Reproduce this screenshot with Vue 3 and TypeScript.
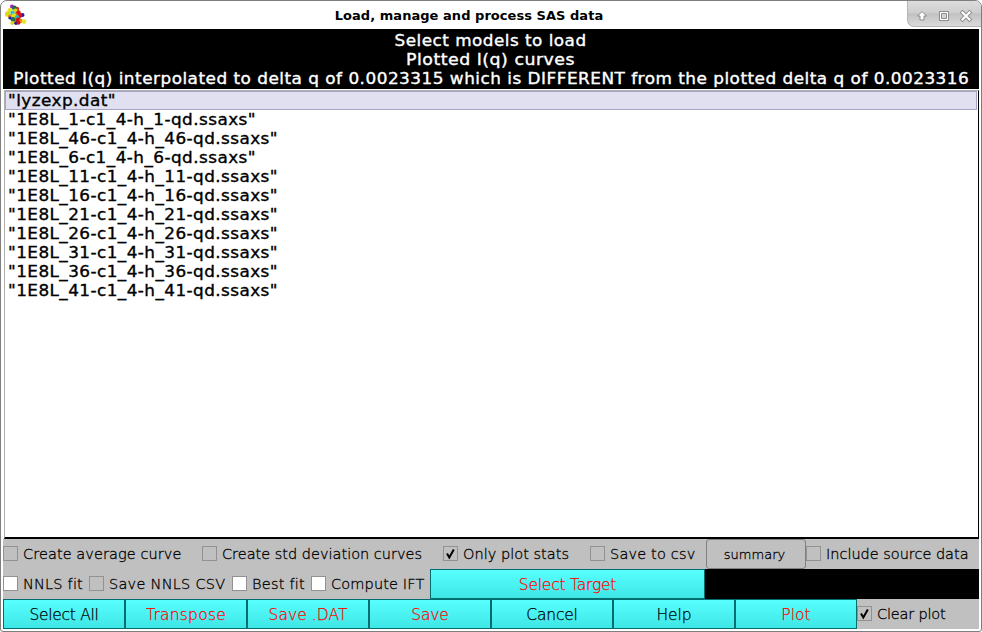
<script setup lang="ts">
type Option = { label: string; width: number; slot: number; checked?: boolean; disabled?: boolean }
type Action = { label: string; width: number; accent?: boolean }

const headings = [
  { text: 'Select models to load', width: 192 },
  { text: 'Plotted I(q) curves', width: 169 },
  { text: 'Plotted I(q) interpolated to delta q of 0.0023315 which is DIFFERENT from the plotted delta q of 0.0023316', width: 956 },
]

const files = [
  { text: '"lyzexp.dat"', width: 108 },
  ...[1, 46, 6, 11, 16, 21, 26, 31, 36, 41].map((n) => ({
    text: `"1E8L_${n}-c1_4-h_${n}-qd.ssaxs"`,
    width: n < 10 ? 248 : 270,
  })),
]

const curveOptions: Option[] = [
  { label: 'Create average curve', width: 158.5, slot: 199, disabled: true },
  { label: 'Create std deviation curves', width: 200, slot: 241, disabled: true },
  { label: 'Only plot stats', width: 106, slot: 147, checked: true },
  { label: 'Save to csv', width: 85.5, slot: 116, disabled: true },
]
const includeOption: Option[] = [{ label: 'Include source data', width: 142.5, slot: 173, disabled: true }]
const fitOptions: Option[] = [
  { label: 'NNLS fit', width: 60, slot: 86 },
  { label: 'Save NNLS CSV', width: 116.5, slot: 143, disabled: true },
  { label: 'Best fit', width: 53, slot: 79 },
  { label: 'Compute IFT', width: 93.5, slot: 119 },
]
const clearOption: Option[] = [{ label: 'Clear plot', width: 68.5, slot: 122, checked: true }]

const actions: Action[] = [
  { label: 'Select All', width: 69 },
  { label: 'Transpose', width: 80, accent: true },
  { label: 'Save .DAT', width: 79, accent: true },
  { label: 'Save', width: 37.5, accent: true },
  { label: 'Cancel', width: 51.5 },
  { label: 'Help', width: 35 },
  { label: 'Plot', width: 29.5, accent: true },
]

const atoms: [number, number, number, string][] = [
  [7, 2.6, 2, '#b414d2'], [12, 5, 2.2, '#e02018'], [9.3, 4, 2.4, '#1f6b4c'], [5, 6.3, 2.4, '#e8e020'],
  [10.5, 7, 2.4, '#d9d420'], [2.7, 10, 2.8, '#dcd81c'], [12, 10, 2.4, '#e88818'], [7.5, 9, 2.2, '#26c4d6'], [13.5, 8.5, 2.2, '#d81414'],
  [17.5, 11, 2, '#1818b0'], [15, 11.5, 2.4, '#e01010'], [5, 12.5, 2, '#e88010'], [9, 12, 2.4, '#e4de1c'],
  [5, 14, 1.6, '#1420b0'], [10.5, 16.5, 2.4, '#e88818'], [12, 13, 2.1, '#20b8c8'], [8, 15.5, 2.4, '#1f7050'], [13.3, 16, 2.6, '#d81010'],
  [16, 17, 2, '#e88818'], [19, 17.6, 2.3, '#e8e428'], [7.4, 19, 2.1, '#dcd818'], [11, 19.2, 1.7, '#1818a8'], [13.5, 18.8, 2, '#d81010'],
]

// Spreads or tightens the letters so that a caption occupies its nominal width.
const vFit = {
  mounted(el: HTMLElement, binding: { value: number }) {
    const natural = el.getBoundingClientRect().width
    el.style.letterSpacing = `${(binding.value - natural) / (el.textContent ?? ' ').length}px`
  },
}

// Widens the glyphs themselves, for the extended face of the banner and the list.
const vStretch = {
  mounted(el: HTMLElement, binding: { value: number }) {
    el.style.transform = `scaleX(${binding.value / el.getBoundingClientRect().width})`
  },
}
</script>

<template>
  <div class="window">
    <header class="titlebar">
      <svg class="logo" width="22" height="22" viewBox="0 0 22 22">
        <circle v-for="(a, i) in atoms" :key="i" :cx="a[0]" :cy="a[1]" :r="a[2]" :fill="a[3]" />
      </svg>
      <span class="caption" v-fit="268.500">Load, manage and process SAS data</span>
      <div class="controls">
        <svg width="74" height="26" viewBox="0 0 74 26" fill="none">
          <path d="M14 10.500l4.500 4.500h-2.500v4h-4v-4h-2.500z" fill="#fff" stroke="#8c8c8c" stroke-linejoin="round" />
          <path d="M31.500 10.500h9v9h-9z" fill="#fff" stroke="#8c8c8c" />
          <path d="M33.500 12.500h5v5h-5z" fill="#d4d4d4" stroke="#8c8c8c" />
          <path d="M54.500 11.500l7 7M61.500 11.500l-7 7" stroke="#8c8c8c" stroke-width="4" stroke-linecap="square" />
          <path d="M54.500 11.500l7 7M61.500 11.500l-7 7" stroke="#fff" stroke-width="2.200" stroke-linecap="square" />
        </svg>
      </div>
    </header>

    <main class="content">
      <div class="banner">
        <div v-for="h in headings" :key="h.text"><span v-stretch="h.width">{{ h.text }}</span></div>
      </div>

      <ul class="list">
        <li v-for="(f, i) in files" :key="f.text" :class="{ selected: i === 0 }"><span v-stretch="f.width">{{ f.text }}</span></li>
      </ul>

      <div class="bar">
        <label v-for="o in curveOptions" :key="o.label" class="option" :style="{ width: o.slot + 'px' }">
          <span class="box" :class="{ dim: o.disabled || o.checked }">
            <svg v-if="o.checked" width="13" height="13" viewBox="0 0 13 13"><path d="M3 6.500l2.300 4L9.800 2.500" /></svg>
          </span>
          <span v-fit="o.width" class="text">{{ o.label }}</span>
        </label>
        <button class="summary"><span v-fit="61.500">summary</span></button>
        <label v-for="o in includeOption" :key="o.label" class="option" :style="{ width: o.slot + 'px' }">
          <span class="box dim"></span><span v-fit="o.width" class="text">{{ o.label }}</span>
        </label>
      </div>

      <div class="bar">
        <label v-for="o in fitOptions" :key="o.label" class="option" :style="{ width: o.slot + 'px' }">
          <span class="box" :class="{ dim: o.disabled }"></span><span v-fit="o.width" class="text">{{ o.label }}</span>
        </label>
        <button class="action accent target"><span v-fit="97.500">Select Target</span></button>
        <div class="field"></div>
      </div>

      <div class="bar">
        <button v-for="a in actions" :key="a.label" class="action" :class="{ accent: a.accent }"><span v-fit="a.width">{{ a.label }}</span></button>
        <label v-for="o in clearOption" :key="o.label" class="option" :style="{ width: o.slot + 'px' }">
          <span class="box dim"><svg width="13" height="13" viewBox="0 0 13 13"><path d="M3 6.500l2.300 4L9.800 2.500" /></svg></span>
          <span v-fit="o.width" class="text">{{ o.label }}</span>
        </label>
      </div>
    </main>
  </div>
</template>

<style>
body { background: #fff; overflow: hidden; }
</style>

<style scoped>
* { box-sizing: border-box; }
span { white-space: nowrap; }
.window {
  width: 982px; height: 632px; padding: 0 2px 2px;
  border: 1px solid #7e7e7e; border-radius: 7px 7px 3px 3px;
  font-family: "DejaVu Sans", sans-serif; background: #fff; color: #000;
}
.titlebar { height: 28px; margin-right: -2px; display: grid; grid-template-columns: 74px 1fr 74px; }
.logo { margin: 3px 0 0 2px; }
.caption { justify-self: center; margin-left: -46px; font-weight: bold; font-size: 13px; line-height: 29px; }
.controls {
  height: 26px; border: 1px solid #b4b4b4; border-width: 0 0 1px 1px; border-radius: 0 6px 0 7px;
  background: linear-gradient(#dcdcdc 0, #cfcfcf 45%, #c2c2c2 52%, #dadada 100%);
}
.controls svg { display: block; }
.content { width: 976px; height: 600px; display: flex; flex-direction: column; }
.banner {
  flex: none; height: 60px; padding-top: 3px; background: #000; color: #fff; text-align: center;
  font-size: 15.5px; line-height: 19px; letter-spacing: 0.45px; -webkit-text-stroke: 0.35px #fff;
}
.banner div { height: 19px; }
.banner span { display: inline-block; transform-origin: center; }
.list span { display: inline-block; transform-origin: left; }
.list {
  flex: none; list-style: none; height: 449px; margin: 1px 0 0 1px; padding: 0 1px 0 0; background: #fff;
  border: 1px solid #b0b0b0; border-right-color: #000; border-bottom: 2px solid #000;
  font-size: 15.5px; letter-spacing: 0.4px; -webkit-text-stroke: 0.35px #000;
}
.list li { height: 19px; line-height: 21px; padding-left: 2.5px; }
.list .selected { line-height: 19px; background: #e0e0f0; border: 1px solid #a4a4c4; padding-left: 1.5px; }
.bar { flex: none; height: 30px; display: flex; background: #c0c0c0; }
.option { display: flex; align-items: center; flex: none; height: 29px; font-size: 14.5px; }
.text { line-height: 28px; margin-left: 5px; font-weight: 200; -webkit-text-stroke: 0.3px #000; }
.box { flex: none; width: 15px; height: 15px; background: #fff; border: 1px solid #929292; }
.box.dim { background: #c0c0c0; }
.box svg { display: block; }
.box path { fill: none; stroke: #000; stroke-width: 2; }
button { font-family: inherit; color: #000; margin: 0; padding: 0; flex: none; text-align: center; }
.summary { width: 100px; height: 30px; padding-right: 3px; border: 1px solid #808080; border-radius: 3px; background: #c0c0c0; font-size: 13px; font-weight: 200; -webkit-text-stroke: 0.3px #000; }
.action {
  width: 122px; height: 30px; padding-top: 2px; border: 1px solid #006e6e; background: linear-gradient(#58ffff, #3ee6e6);
  font-size: 15.5px; line-height: 26px; font-weight: 200; -webkit-text-stroke: 0.25px #000;
}
.action.accent { color: #f00; -webkit-text-stroke-color: #f00; }
.target { width: 275px; }
.field { flex: 1; background: #000; }
</style>
